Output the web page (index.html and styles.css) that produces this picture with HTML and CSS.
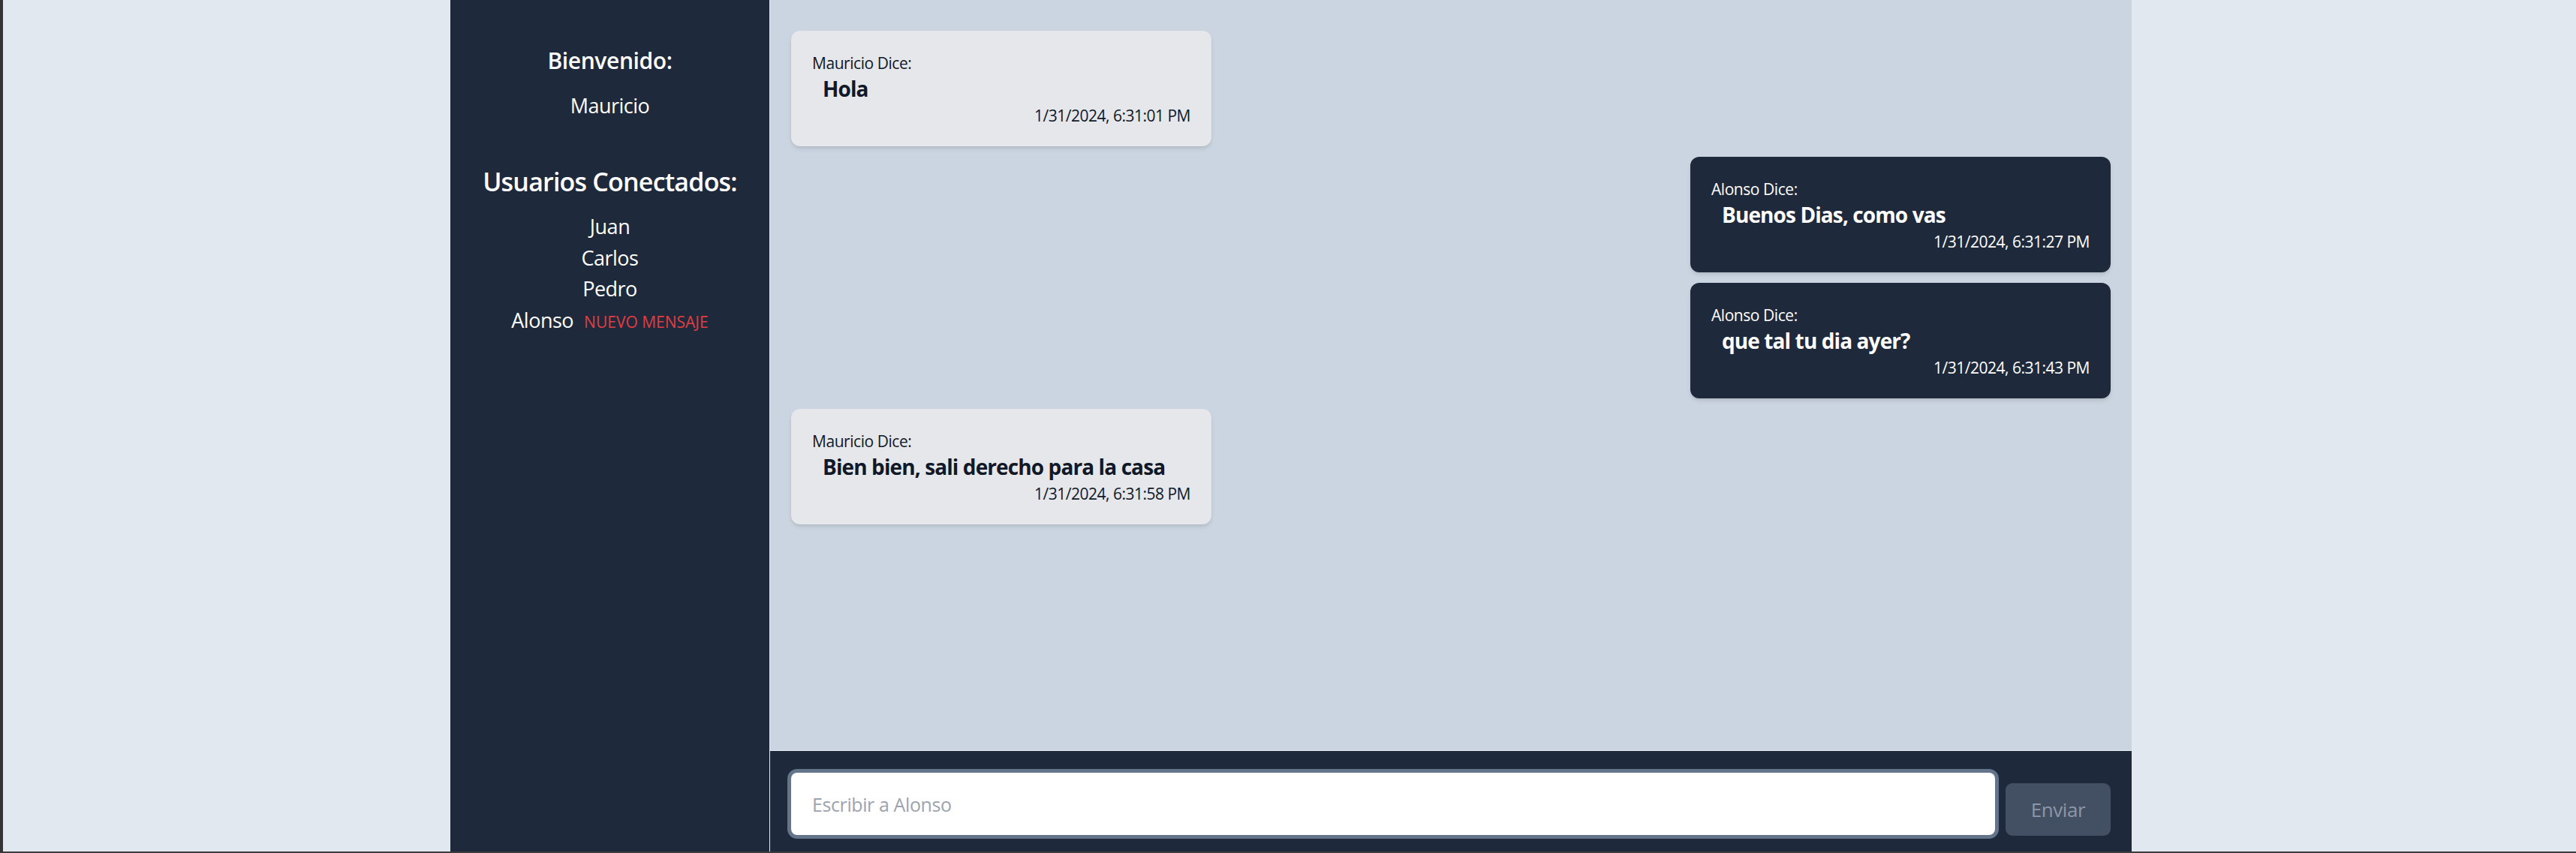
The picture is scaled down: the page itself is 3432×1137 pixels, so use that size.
FILE: index.html
```html
<!DOCTYPE html>
<html lang="es">
<head>
<meta charset="utf-8">
<title>Chat</title>
<link rel="stylesheet" href="styles.css">
</head>
<body>
<div class="frame">
  <div class="app">
    <aside class="sidebar">
      <h2 class="welcome">Bienvenido:</h2>
      <p class="me">Mauricio</p>
      <h2 class="users-title">Usuarios Conectados:</h2>
      <ul class="users">
        <li>Juan</li>
        <li>Carlos</li>
        <li>Pedro</li>
        <li>Alonso<span class="badge">NUEVO MENSAJE</span></li>
      </ul>
    </aside>
    <main class="chat">
      <section class="messages">
        <div class="msg msg-in">
          <div class="msg-author">Mauricio Dice:</div>
          <div class="msg-text">Hola</div>
          <div class="msg-time">1/31/2024, 6:31:01 PM</div>
        </div>
        <div class="msg msg-out">
          <div class="msg-author">Alonso Dice:</div>
          <div class="msg-text">Buenos Dias, como vas</div>
          <div class="msg-time">1/31/2024, 6:31:27 PM</div>
        </div>
        <div class="msg msg-out">
          <div class="msg-author">Alonso Dice:</div>
          <div class="msg-text">que tal tu dia ayer?</div>
          <div class="msg-time">1/31/2024, 6:31:43 PM</div>
        </div>
        <div class="msg msg-in">
          <div class="msg-author">Mauricio Dice:</div>
          <div class="msg-text">Bien bien, sali derecho para la casa</div>
          <div class="msg-time">1/31/2024, 6:31:58 PM</div>
        </div>
      </section>
      <footer class="composer">
        <input class="composer-input" type="text" placeholder="Escribir a Alonso" autofocus>
        <button class="send" type="button">Enviar</button>
      </footer>
    </main>
  </div>
</div>
</body>
</html>
```
FILE: styles.css
```css
html, body {
  margin: 0;
  height: 100%;
}

body {
  background: #e2e8f0;
  font-family: "Open Sans", "Noto Sans", sans-serif;
  overflow: hidden;
}

.frame {
  height: 1137px;
  box-sizing: border-box;
  border-left: 4px solid #343434;
  border-bottom: 2px solid #3c3c3c;
  padding-left: 4px;
  display: flex;
  justify-content: center;
}

.app {
  width: 2240px;
  height: 100%;
  display: flex;
}

/* Sidebar */
.sidebar {
  width: 425px;
  flex: none;
  box-sizing: border-box;
  background: #1e293b;
  color: #ffffff;
  text-align: center;
  padding-top: 60px;
}

.welcome {
  margin: 0;
  font-size: 30px;
  line-height: 42px;
  font-weight: 600;
  letter-spacing: -0.4px;
}

.me {
  margin: 18px 0 0;
  font-size: 27px;
  line-height: 42px;
  letter-spacing: -0.5px;
}

.users-title {
  margin: 56px 0 0;
  font-size: 34px;
  line-height: 48px;
  font-weight: 600;
  letter-spacing: -0.8px;
}

.users {
  list-style: none;
  margin: 15px 0 0;
  padding: 0;
  font-size: 27px;
  line-height: 41.7px;
  letter-spacing: -0.5px;
}

.badge {
  color: #e23d42;
  font-size: 21px;
  letter-spacing: 0;
  margin-left: 14px;
}

/* Chat */
.chat {
  flex: 1;
  display: flex;
  flex-direction: column;
  border-left: 1px solid #e2e8f0;
  background: #cbd5e1;
}

.messages {
  flex: 1;
  display: flex;
  flex-direction: column;
  gap: 14px;
  padding: 41px 28px 0;
}

.msg {
  width: 560px;
  height: 154px;
  box-sizing: border-box;
  border-radius: 12px;
  padding: 28px 28px 0;
  box-shadow: 0 4px 6px -1px rgba(0, 0, 0, 0.1), 0 2px 4px -2px rgba(0, 0, 0, 0.1);
}

.msg-in {
  align-self: flex-start;
  background: #e5e7eb;
  color: #111827;
}

.msg-out {
  align-self: flex-end;
  background: #1e293b;
  color: #ffffff;
}

.msg-author {
  font-size: 21px;
  line-height: 30px;
  letter-spacing: -0.45px;
}

.msg-text {
  font-size: 28px;
  line-height: 38px;
  font-weight: 700;
  padding-left: 14px;
  letter-spacing: -0.9px;
  white-space: nowrap;
}

.msg-time {
  margin-top: 2px;
  font-size: 21px;
  line-height: 30px;
  letter-spacing: -0.5px;
  text-align: right;
}

/* Composer */
.composer {
  height: 135px;
  flex: none;
  box-sizing: border-box;
  border-top: 1px solid #e2e8f0;
  background: #1e293b;
  display: flex;
  align-items: flex-end;
  gap: 14px;
  padding: 0 28px 22px;
}

.composer-input {
  flex: 1;
  height: 83px;
  box-sizing: border-box;
  border: none;
  border-radius: 8px;
  background: #ffffff;
  box-shadow: 0 0 0 5px #64748b;
  padding: 0 28px;
  font-family: "Open Sans", "Noto Sans", sans-serif;
  font-size: 25px;
  letter-spacing: -0.4px;
  color: #111827;
  outline: none;
}

.composer-input::placeholder {
  color: #9ca3af;
}

.send {
  width: 140px;
  height: 70px;
  margin-bottom: -1px;
  border: none;
  border-radius: 9px;
  background: #434f63;
  color: #8b97a9;
  font-family: "Open Sans", "Noto Sans", sans-serif;
  font-size: 26px;
  letter-spacing: -0.4px;
}
```
